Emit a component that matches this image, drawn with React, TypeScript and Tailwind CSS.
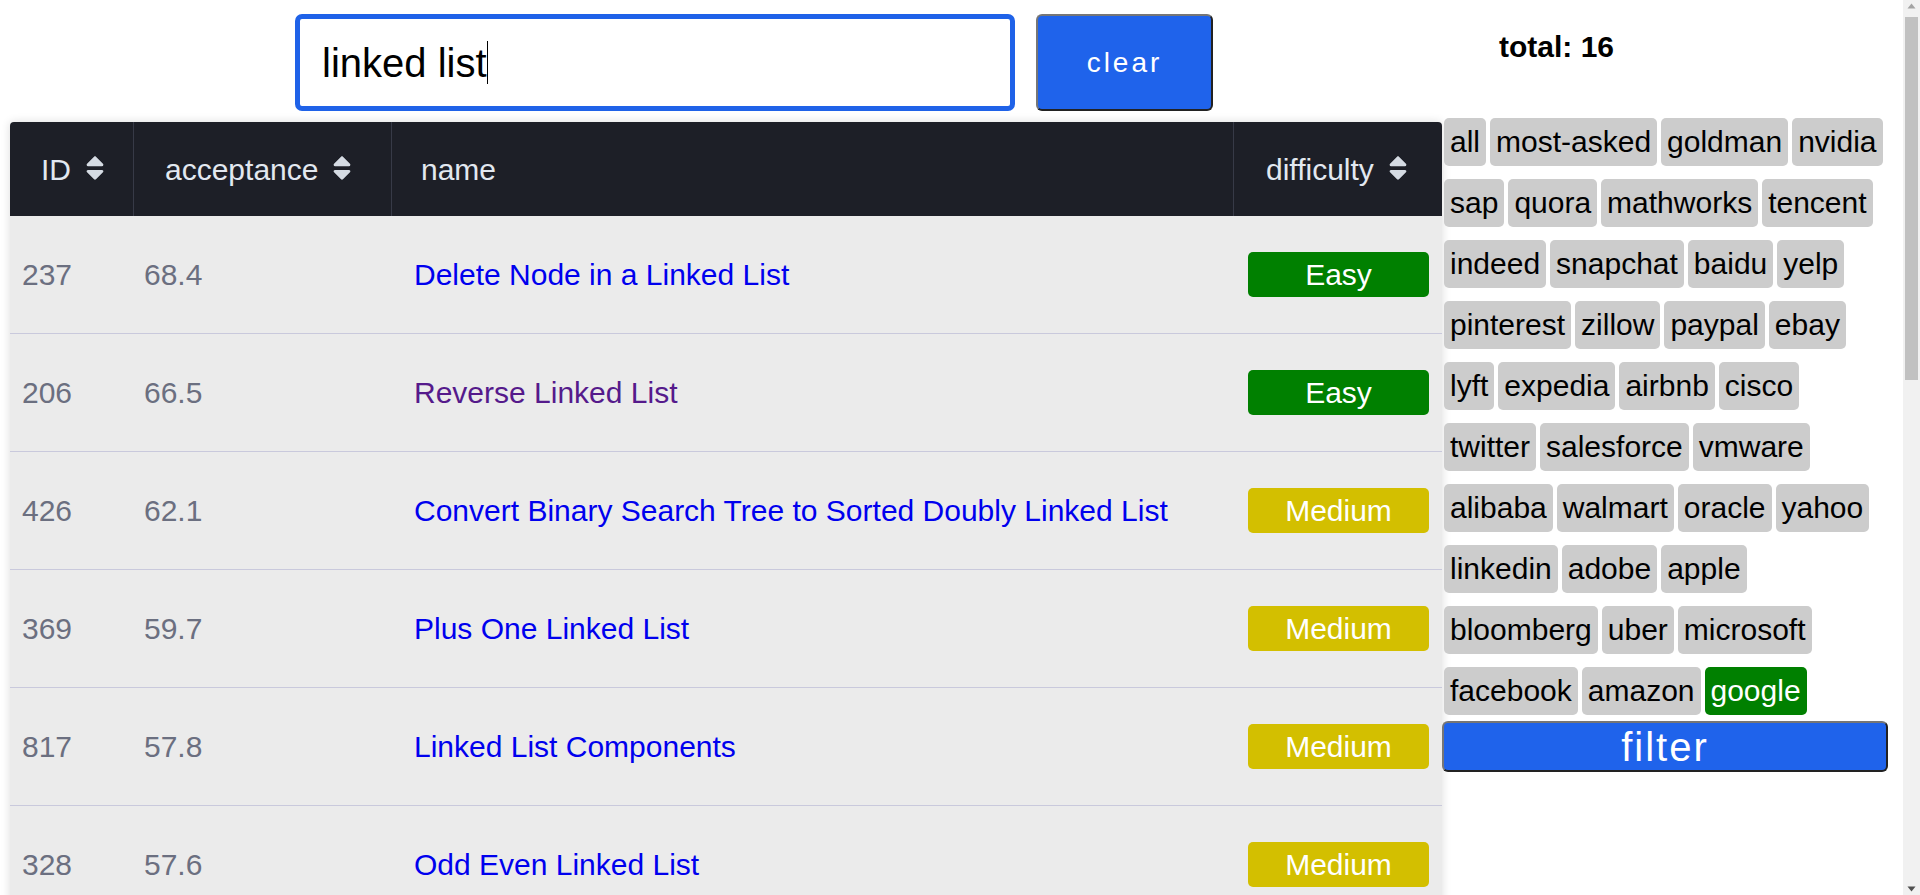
import React from "react";
import { FaSort } from "react-icons/fa";

type Row = { id: number; acc: string; name: string; diff: "Easy" | "Medium"; visited?: boolean };

const rows: Row[] = [
  { id: 237, acc: "68.4", name: "Delete Node in a Linked List", diff: "Easy" },
  { id: 206, acc: "66.5", name: "Reverse Linked List", diff: "Easy", visited: true },
  { id: 426, acc: "62.1", name: "Convert Binary Search Tree to Sorted Doubly Linked List", diff: "Medium" },
  { id: 369, acc: "59.7", name: "Plus One Linked List", diff: "Medium" },
  { id: 817, acc: "57.8", name: "Linked List Components", diff: "Medium" },
  { id: 328, acc: "57.6", name: "Odd Even Linked List", diff: "Medium" },
  { id: 430, acc: "55.4", name: "Flatten a Multilevel Doubly Linked List", diff: "Medium" },
  { id: 382, acc: "53.9", name: "Linked List Random Node", diff: "Medium" },
  { id: 114, acc: "51.2", name: "Flatten Binary Tree to Linked List", diff: "Medium" },
  { id: 141, acc: "43.9", name: "Linked List Cycle", diff: "Easy" },
  { id: 160, acc: "42.1", name: "Intersection of Two Linked Lists", diff: "Easy" },
  { id: 234, acc: "41.3", name: "Palindrome Linked List", diff: "Easy" },
  { id: 142, acc: "39.5", name: "Linked List Cycle II", diff: "Medium" },
  { id: 203, acc: "39.2", name: "Remove Linked List Elements", diff: "Easy" },
  { id: 92, acc: "38.6", name: "Reverse Linked List II", diff: "Medium" },
  { id: 708, acc: "31.2", name: "Insert into a Sorted Circular Linked List", diff: "Medium" },
];

const tags = [
  "all", "most-asked", "goldman", "nvidia", "sap", "quora", "mathworks", "tencent",
  "indeed", "snapchat", "baidu", "yelp", "pinterest", "zillow", "paypal", "ebay",
  "lyft", "expedia", "airbnb", "cisco", "twitter", "salesforce", "vmware",
  "alibaba", "walmart", "oracle", "yahoo", "linkedin", "adobe", "apple",
  "bloomberg", "uber", "microsoft", "facebook", "amazon", "google",
];

function SortIcon() {
  return <FaSort className="inline-block ml-[9px] align-[-3px] text-[#d5dbe3]" size={30} />;
}

function FakeScrollbar() {
  return (
    <div className="fixed top-0 right-0 w-[17px] h-[895px] bg-[#f1f1f1]">
      <svg className="absolute top-[3px] left-[4px]" width="9" height="6" viewBox="0 0 9 6">
        <path d="M4.5 0.5 L8.5 5.5 L0.5 5.5 Z" fill="#a3a3a3" />
      </svg>
      <div className="absolute top-[17px] left-[2px] w-[13px] h-[363px] bg-[#c1c1c1]" />
      <svg className="absolute bottom-[3px] left-[4px]" width="9" height="6" viewBox="0 0 9 6">
        <path d="M0.5 0.5 L8.5 0.5 L4.5 5.5 Z" fill="#505050" />
      </svg>
    </div>
  );
}

export default function App() {
  return (
    <div className="flex bg-white text-black font-['Liberation_Sans',Arial,sans-serif] text-[30px]">
      {/* left column */}
      <div className="w-[1442px] shrink-0 pl-[10px]">
        <div className="flex gap-[21px] pt-[14px] pl-[285px]">
          <div className="flex items-center w-[720px] h-[97px] border-[5px] border-[#1f62e8] rounded-[7px] bg-white pl-[22px] text-[40px] leading-none">
            <span>linked list</span>
            <span className="inline-block w-px h-[43px] bg-black" />
          </div>
          <button className="w-[177px] h-[97px] rounded-[6px] bg-[#1f63eb] text-white text-[28px] tracking-[3px] border-2 border-t-[#767676] border-l-[#767676] border-b-[#222222] border-r-[#222222]">
            clear
          </button>
        </div>

        <div className="mt-[11px] rounded-t-[4px] overflow-hidden shadow-[0_0_10px_rgba(0,0,0,0.14)]">
          <div className="flex h-[94px] bg-[#1d1f27] text-[#e2e8f0]">
            <div className="w-[124px] flex items-center pl-[31px] border-r border-[#373a47]">
              <span>ID<SortIcon /></span>
            </div>
            <div className="w-[258px] flex items-center pl-[31px] border-r border-[#373a47]">
              <span>acceptance<SortIcon /></span>
            </div>
            <div className="w-[842px] flex items-center pl-[29px] border-r border-[#373a47]">
              <span>name</span>
            </div>
            <div className="w-[208px] flex items-center pl-[32px]">
              <span>difficulty<SortIcon /></span>
            </div>
          </div>
          <div className="bg-[#ebebeb]">
            {rows.map((r) => (
              <div key={r.id} className="flex h-[118px] border-b border-[#c9c9dc] items-center">
                <div className="w-[124px] pl-[12px] text-[#6b6f80]">{r.id}</div>
                <div className="w-[258px] pl-[10px] text-[#6b6f80]">{r.acc}</div>
                <div className="w-[842px] pl-[22px]">
                  <a href="#" className={r.visited ? "text-[#551a8b]" : "text-[#0000ee]"}>
                    {r.name}
                  </a>
                </div>
                <div className="w-[208px] pl-[14px]">
                  <div
                    className={
                      "w-[181px] h-[45px] rounded-[5px] flex items-center justify-center text-white " +
                      (r.diff === "Easy" ? "bg-[#008000]" : "bg-[#d3bf00]")
                    }
                  >
                    {r.diff}
                  </div>
                </div>
              </div>
            ))}
          </div>
        </div>
      </div>

      {/* right column */}
      <div className="w-[446px] shrink-0 pt-[30px]">
        <div className="pl-[57px] h-[34px] leading-[34px] font-bold">total: 16</div>
        <div className="mt-[54px] ml-[2px] w-[442px] flex flex-wrap gap-x-[4px] gap-y-[13px]">
          {tags.map((t) => (
            <span
              key={t}
              className={
                "h-[48px] leading-[48px] px-[6px] rounded-[5px] " +
                (t === "google" ? "bg-[#008000] text-white" : "bg-[#cccccc] text-black")
              }
            >
              {t}
            </span>
          ))}
        </div>
        <button className="mt-[6px] w-[446px] h-[51px] rounded-[6px] bg-[#1f63eb] text-white text-[40px] tracking-[2px] leading-none border-2 border-t-[#767676] border-l-[#767676] border-b-[#222222] border-r-[#222222]">
          filter
        </button>
      </div>

      <FakeScrollbar />
    </div>
  );
}
